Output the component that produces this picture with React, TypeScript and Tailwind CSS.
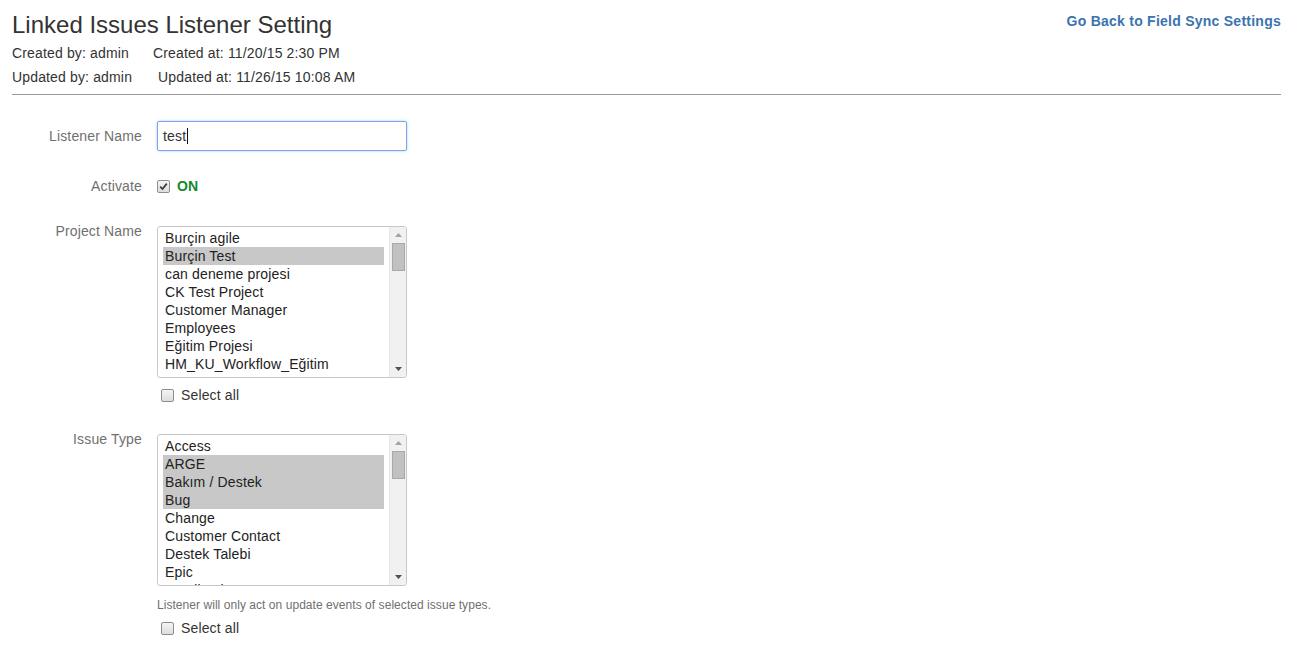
import React from "react";

/* ---------- Small form controls ---------- */

function CheckBox({ checked = false }: { checked?: boolean }) {
  return (
    <span className="inline-flex h-[13px] w-[13px] shrink-0 items-center justify-center rounded-[2px] border border-[#8e8e8e] bg-gradient-to-b from-[#f4f4f4] to-[#dedede]">
      {checked && (
        <svg width="9" height="9" viewBox="0 0 9 9">
          <path d="M1.2 4.6 L3.5 7 L7.8 1.6" fill="none" stroke="#3a3a3a" strokeWidth="1.7" />
        </svg>
      )}
    </span>
  );
}

function ListBox({ items, selected }: { items: string[]; selected: string[] }) {
  return (
    <div className="mt-[5px] flex h-[152px] w-[250px] overflow-hidden rounded-[3px] border border-[#c8c8c8] bg-white">
      <div className="flex-1 overflow-hidden pl-[5px] pr-[5px] pt-[2px]">
        {items.map((it) => (
          <div
            key={it}
            className={`h-[18px] whitespace-nowrap pl-[2px] leading-[18px] text-[14px] text-[#222] ${
              selected.includes(it) ? "bg-[#c8c8c8]" : ""
            }`}
          >
            {it}
          </div>
        ))}
      </div>
      <div className="flex w-[17px] flex-col items-center border-l border-[#e8e8e8] bg-[#f1f1f1]">
        <div className="flex h-[16px] items-center justify-center">
          <svg width="7" height="4" viewBox="0 0 7 4">
            <path d="M0 4 L3.5 0 L7 4 Z" fill="#a3a3a3" />
          </svg>
        </div>
        <div className="h-[28px] w-[13px] border border-[#a9a9a9] bg-[#c1c1c1]" />
        <div className="flex-1" />
        <div className="flex h-[16px] items-center justify-center">
          <svg width="7" height="4" viewBox="0 0 7 4">
            <path d="M0 0 L7 0 L3.5 4 Z" fill="#505050" />
          </svg>
        </div>
      </div>
    </div>
  );
}

function SelectAll() {
  return (
    <div className="flex h-[20px] items-center pl-[4px]">
      <CheckBox />
      <span className="ml-[7px] text-[14px] text-[#333]">Select all</span>
    </div>
  );
}

/* ---------- Data ---------- */

const PROJECTS = [
  "Burçin agile",
  "Burçin Test",
  "can deneme projesi",
  "CK Test Project",
  "Customer Manager",
  "Employees",
  "Eğitim Projesi",
  "HM_KU_Workflow_Eğitim",
  "Human Resources Management",
];

const ISSUE_TYPES = [
  "Access",
  "ARGE",
  "Bakım / Destek",
  "Bug",
  "Change",
  "Customer Contact",
  "Destek Talebi",
  "Epic",
  "Feedback",
];

export default function App() {
  return (
    <div className="min-h-screen bg-white pl-[12px] pr-[26px] pt-[10px] font-['Liberation_Sans',Arial,sans-serif] tracking-[0.15px] text-[#333]">
      {/* header */}
      <div className="flex items-start justify-between">
        <div>
          <h1 className="text-[24px] leading-[30px] font-normal tracking-normal text-[#333]">
            Linked Issues Listener Setting
          </h1>
          <div className="mt-[1px] text-[14px] leading-[24px]">
            <span>Created by: admin</span>
            <span className="ml-[24px]">Created at: 11/20/15 2:30 PM</span>
          </div>
          <div className="text-[14px] leading-[24px]">
            <span>Updated by: admin</span>
            <span className="ml-[26px]">Updated at: 11/26/15 10:08 AM</span>
          </div>
        </div>
        <a href="#" className="mt-[1px] text-[14px] font-bold leading-[20px] tracking-[0.25px] text-[#3b73af]">
          Go Back to Field Sync Settings
        </a>
      </div>
      <div className="mt-[5px] border-t border-[#999]" />

      {/* form */}
      <div className="mt-[26px] grid grid-cols-[130px_1fr] gap-x-[15px] text-[14px]">
        <div className="flex h-[30px] items-center justify-end text-[#707070]">Listener Name</div>
        <div className="flex h-[30px] w-[250px] items-center rounded-[2px] border border-[#7aa7e6] pl-[5px] shadow-[0_0_3px_#a9c8f2] text-[#333]">
          test
          <span className="ml-[1px] h-[16px] w-[1px] bg-[#111]" />
        </div>

        <div className="mt-[25px] flex h-[20px] items-center justify-end text-[#707070]">Activate</div>
        <div className="mt-[25px] flex h-[20px] items-center">
          <CheckBox checked />
          <span className="ml-[7px] font-bold text-[#14892c]">ON</span>
        </div>

        <div className="mt-[25px] text-right leading-[20px] text-[#707070]">Project Name</div>
        <div className="mt-[25px]">
          <ListBox items={PROJECTS} selected={["Burçin Test"]} />
          <div className="mt-[7px]">
            <SelectAll />
          </div>
        </div>

        <div className="mt-[24px] text-right leading-[20px] text-[#707070]">Issue Type</div>
        <div className="mt-[24px]">
          <ListBox items={ISSUE_TYPES} selected={["ARGE", "Bakım / Destek", "Bug"]} />
          <div className="mt-[11px] text-[12px] leading-[16px] tracking-[0.05px] text-[#707070]">
            Listener will only act on update events of selected issue types.
          </div>
          <div className="mt-[5px]">
            <SelectAll />
          </div>
        </div>
      </div>
    </div>
  );
}
